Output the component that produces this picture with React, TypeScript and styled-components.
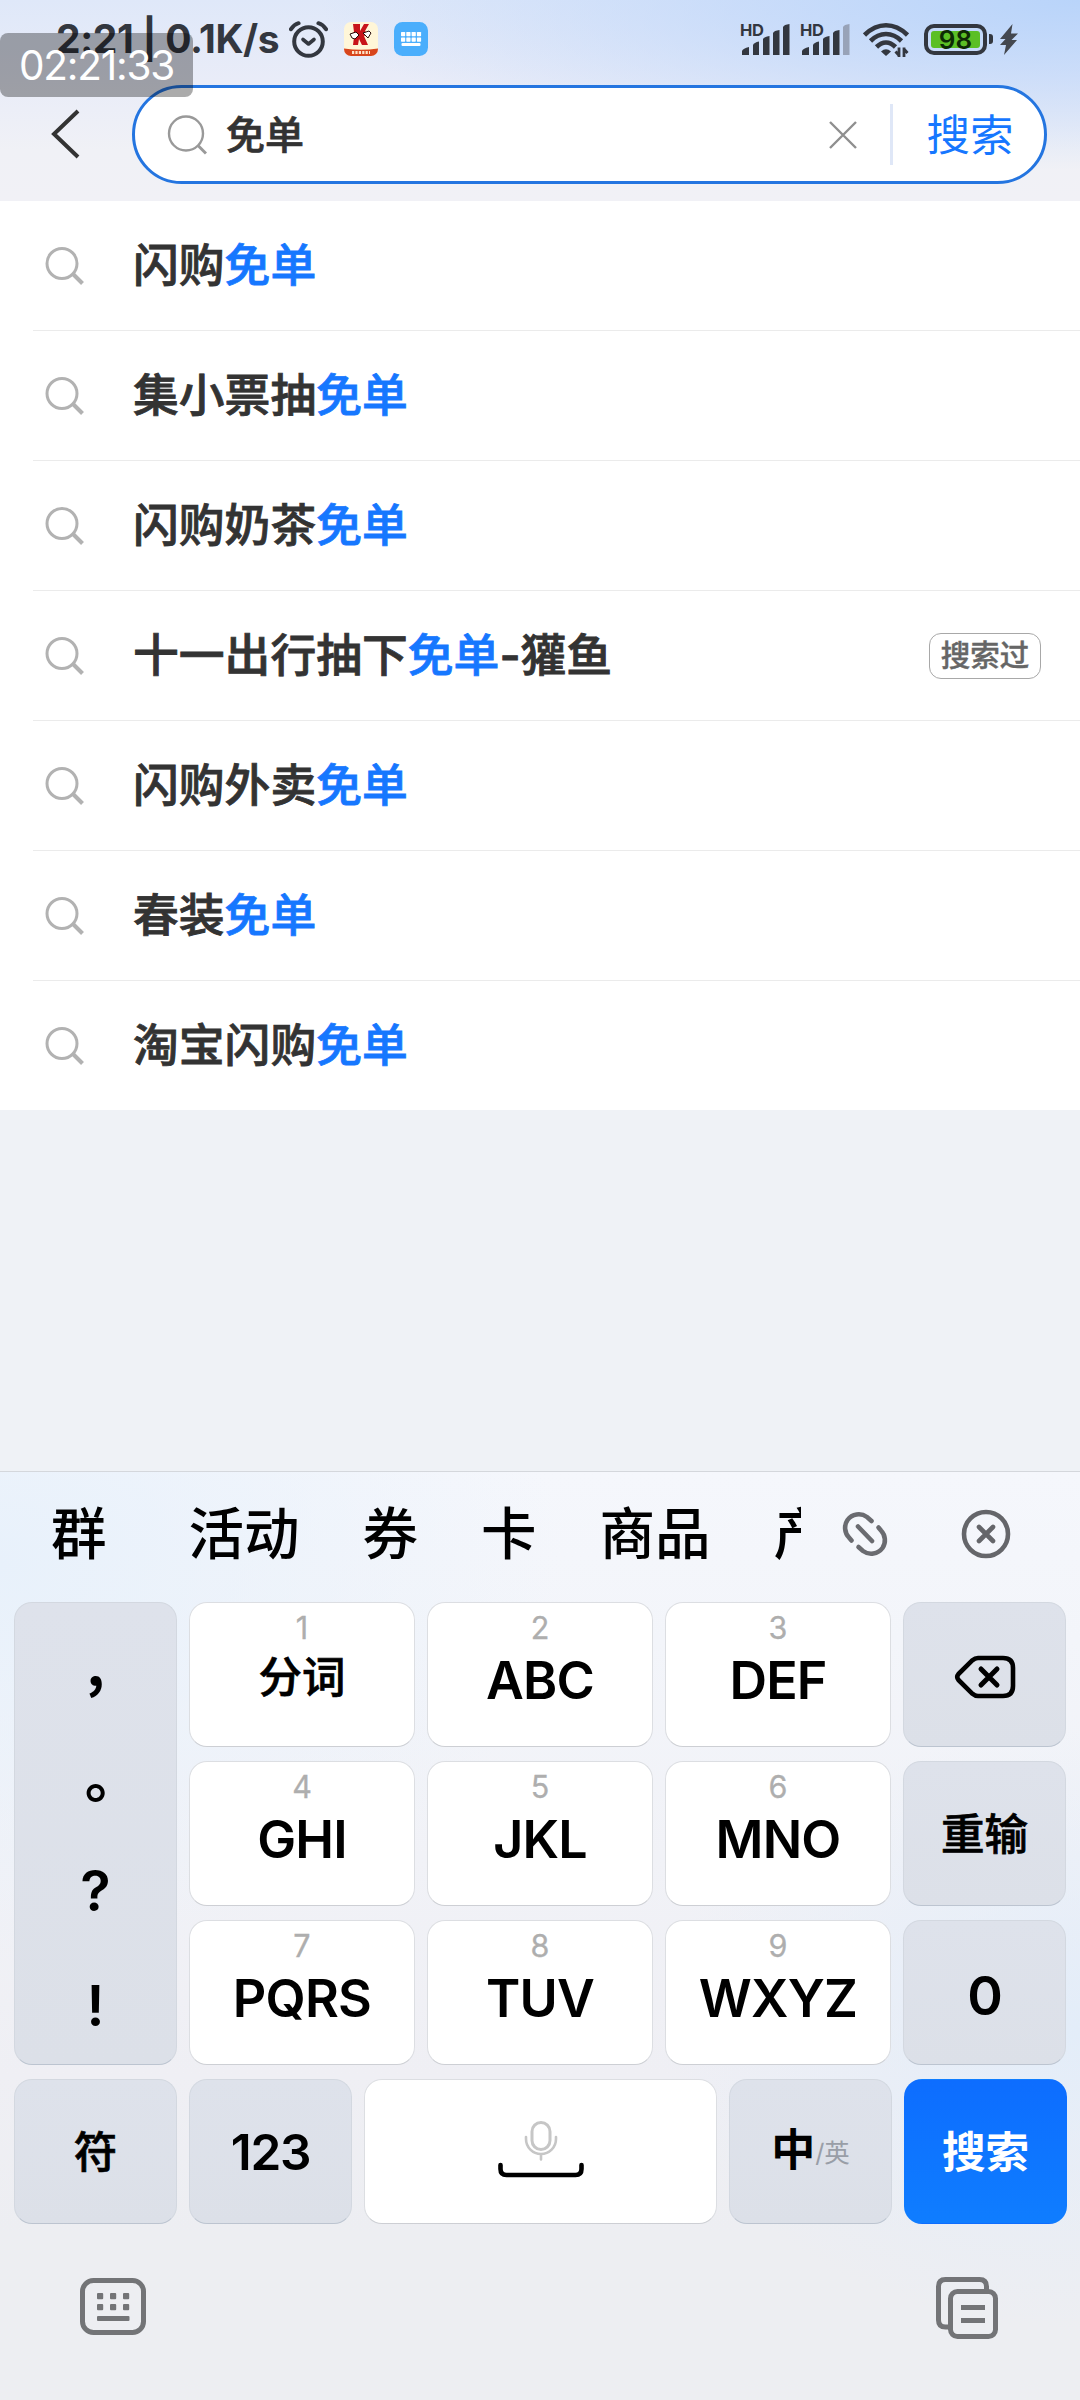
import React from "react";
import styled, { createGlobalStyle, css } from "styled-components";

const GlobalStyle = createGlobalStyle`
  *, *::before, *::after { box-sizing: border-box; }
  html, body { margin: 0; padding: 0; }
  body {
    width: 1080px;
    font-family: Inter, "Noto Sans CJK SC", sans-serif;
    background: #eff2f6;
    -webkit-font-smoothing: antialiased;
  }
  svg { display: block; flex: none; }
`;

const BLUE = "#1677ff";
const INK = "#333333";

const Screen = styled.div`
  position: relative;
  width: 1080px;
  height: 2400px;
  display: flex;
  flex-direction: column;
  overflow: hidden;
  background: #eff2f6;
`;

/* ---------- header ---------- */

const Header = styled.header`
  height: 201px;
  flex: none;
  display: flex;
  flex-direction: column;
  background:
    radial-gradient(ellipse 760px 170px at 100% 0, #b9d4fa 0%, rgba(190, 214, 250, 0.65) 45%, rgba(200, 220, 250, 0) 100%),
    linear-gradient(180deg, #dfe8f9 0%, #e9ecf8 40%, #f0f1f6 75%, #f1f1f6 100%);
`;

const StatusBar = styled.div`
  height: 85px;
  display: flex;
  align-items: flex-start;
  padding: 21px 62px 0 56px;
`;

const Clock = styled.span`
  width: 233px;
  font-size: 39px;
  line-height: 36px;
  font-weight: 700;
  letter-spacing: -0.4px;
  color: #33373f;
  white-space: nowrap;
`;

const StatusLeft = styled.div`
  display: flex;
  flex: 1;
`;

const StatusRight = styled.div`
  display: flex;
`;

const AppBadge = styled.span`
  margin: 1px 0 0 16px;
`;

const SignalBox = styled.span`
  width: 60px;
`;

const WifiBox = styled.span`
  margin-left: 3px;
`;

const Battery = styled.div`
  width: 63px;
  height: 31px;
  margin: 3px 2px 0 15px;
  padding: 3px;
  border: 4px solid #33373f;
  border-radius: 10px;
`;

const BatteryLevel = styled.div`
  height: 100%;
  border-radius: 3px;
  background: #5bbf25;
  color: #0d2a05;
  font-size: 26px;
  font-weight: 600;
  line-height: 18px;
  text-align: center;
`;

const BatteryCap = styled.i`
  width: 4px;
  height: 10px;
  margin: 13px 7px 0 0;
  border-radius: 0 3px 3px 0;
  background: #33373f;
`;

const BoltBox = styled.span`
  margin-top: 3px;
`;

const Timestamp = styled.div`
  position: absolute;
  left: 0;
  top: 33px;
  width: 193px;
  height: 64px;
  border-radius: 8px;
  background: rgba(0, 0, 0, 0.33);
  color: #fff;
  font-size: 40.5px;
  line-height: 66px;
  text-align: center;
  letter-spacing: -1.2px;
`;

const SearchRow = styled.div`
  display: flex;
  align-items: flex-start;
  padding: 0 33px 0 49px;
`;

const BackButton = styled.span`
  width: 83px;
  height: 98px;
  display: flex;
  align-items: center;
`;

const SearchField = styled.div`
  flex: 1;
  height: 99px;
  display: flex;
  align-items: center;
  padding: 0 30.5px 0 32px;
  border: 3px solid #2475e0;
  border-radius: 50px;
  background: #fff;
`;

const Query = styled.span`
  flex: 1;
  padding-left: 19px;
  font-size: 39px;
  line-height: 50px;
  font-weight: 500;
  -webkit-text-stroke: 0.7px ${INK};
  color: ${INK};
`;

const FieldDivider = styled.i`
  width: 3px;
  height: 61px;
  margin: 0 34px 0 33px;
  background: #dfe7f7;
`;

const SearchAction = styled.span`
  font-size: 43.5px;
  line-height: 60px;
  color: ${BLUE};
`;

/* ---------- suggestions ---------- */

const Suggestions = styled.ul`
  margin: 0;
  padding: 0 0 0 33px;
  list-style: none;
  background: #fff;
`;

const SuggestionRow = styled.li`
  height: 130px;
  display: flex;
  align-items: center;
  padding: 0 39px 0 11px;
  &:first-child {
    height: 129px;
  }
  & + & {
    border-top: 1px solid #ebebeb;
  }
`;

const SuggestionText = styled.span`
  flex: 1;
  padding-left: 47px;
  font-size: 45.8px;
  line-height: 60px;
  font-weight: 500;
  -webkit-text-stroke: 0.8px currentColor;
  color: ${INK};
`;

const Match = styled.em`
  font-style: normal;
  color: ${BLUE};
`;

const SearchedTag = styled.span`
  width: 112px;
  height: 46px;
  border: 1px solid #a8a8a8;
  border-radius: 12px;
  font-size: 29.5px;
  line-height: 43px;
  font-weight: 500;
  -webkit-text-stroke: 0.4px currentColor;
  text-align: center;
  white-space: nowrap;
  color: #666;
`;

/* ---------- keyboard ---------- */

const Keyboard = styled.section`
  margin-top: auto;
  height: 929px;
  flex: none;
  border-top: 1px solid #d4d7dc;
  background:
    radial-gradient(ellipse 560px 400px at 0 10%, #e8f1fb 0%, rgba(232, 242, 252, 0) 100%),
    radial-gradient(ellipse 420px 300px at 100% 60%, #e3edf9 0%, rgba(227, 237, 249, 0) 100%),
    linear-gradient(180deg, #f5f7fc 0%, #f3f5fa 18%, #efeff4 65%, #edeef2 82%, #edeef2 100%);
`;

const CandidateBar = styled.div`
  height: 130px;
  display: flex;
  align-items: center;
  padding: 0 68px 6px 51px;
`;

const CandidateList = styled.div`
  width: 750px;
  display: flex;
  gap: 63px;
  overflow: hidden;
  white-space: nowrap;
`;

const Candidate = styled.span<{ $wide?: boolean }>`
  flex: none;
  margin-right: ${(p) => (p.$wide ? 19 : 0)}px;
  font-size: 55.5px;
  line-height: 72px;
  font-weight: 500;
  color: #000;
`;

const BarIcon = styled.span<{ $left: number }>`
  margin-left: ${(p) => p.$left}px;
`;

const KeyGrid = styled.div`
  display: grid;
  grid-template-columns: 163px 1fr 1fr 1fr 163px;
  grid-auto-rows: 145px;
  gap: 14px 12px;
  padding: 0 14px;
`;

const BottomKeys = styled.div`
  display: grid;
  grid-template-columns: 163px 163px 1fr 163px 163px;
  grid-auto-rows: 145px;
  gap: 12px;
  padding: 14px 13px 0 14px;
`;

type Tone = "light" | "dim" | "accent";

const tones = {
  light: css`
    background: #fff;
    border-color: #dcdee2;
    border-bottom-color: #cdcfd4;
    color: #000;
  `,
  dim: css`
    background: linear-gradient(180deg, #dee2eb, #dce0e8);
    border-color: #d3d8e0;
    border-bottom-color: #bcc4d0;
    color: #000;
  `,
  accent: css`
    background: linear-gradient(180deg, #0d6dff, #0f7dff);
    border-color: transparent;
    color: #fff;
  `,
};

const Key = styled.div<{ $tone: Tone; $tall?: boolean }>`
  display: flex;
  flex-direction: column;
  align-items: center;
  justify-content: center;
  border: 1px solid;
  border-radius: 18px;
  background-origin: border-box;
  ${(p) => tones[p.$tone]}
  ${(p) => p.$tall && "grid-row: span 3;"}
`;

const LetterKey = styled(Key)`
  justify-content: flex-start;
  padding-top: 9px;
`;

const KeyHint = styled.span`
  font-size: 30.5px;
  line-height: 32px;
  color: #aeaeae;
  -webkit-text-stroke: 0.3px currentColor;
`;

const KeyLetters = styled.span`
  margin-top: 7px;
  font-size: 52px;
  line-height: 60px;
  font-weight: 600;
  letter-spacing: -0.8px;
`;

const KeyWord = styled.span<{ $bold?: boolean; $top?: number }>`
  margin-top: ${(p) => p.$top ?? 0}px;
  font-size: 43.5px;
  line-height: 60px;
  font-weight: ${(p) => (p.$bold ? 700 : 500)};
  ${(p) => !p.$bold && "-webkit-text-stroke: 0.7px currentColor;"}
`;

const KeyDigits = styled.span<{ $size: number; $top?: number }>`
  margin-top: ${(p) => p.$top ?? 0}px;
  font-size: ${(p) => p.$size}px;
  line-height: 60px;
  font-weight: 600;
  letter-spacing: -1.2px;
`;

const Punctuation = styled.span<{ $drop?: number; $cjk?: boolean }>`
  height: 115px;
  padding-top: ${(p) => p.$drop ?? 0}px;
  font-family: ${(p) => (p.$cjk ? "" : "Inter, ")}"Noto Sans CJK TC", sans-serif;
  font-size: 56px;
  line-height: 115px;
  font-weight: 600;
`;

const LanguageKey = styled.span`
  display: flex;
  align-items: center;
  line-height: 60px;
  padding-bottom: 3px;
`;

const LanguageMain = styled.span`
  font-size: 44px;
  font-weight: 700;
`;

const LanguageAlt = styled.span`
  padding-top: 5px;
  font-size: 25.5px;
  color: #999ea7;
`;

const NavBar = styled.footer`
  display: flex;
  justify-content: space-between;
  padding: 53px 82px 0 80px;
`;

/* ---------- icons ---------- */

const AlarmIcon = () => (
  <svg width="39" height="37" viewBox="0 0 39 37" fill="none" stroke="#33373f" strokeWidth="4" strokeLinecap="round" strokeLinejoin="round">
    <circle cx="19.5" cy="20.5" r="14.3" />
    <path d="M2 8.2Q5 3.5 9.6 2.2M37 8.2Q34 3.5 29.4 2.2" />
    <path d="M14 18.5l5.5 4.5 5.5-4.5" strokeWidth="3.6" />
  </svg>
);

const MascotIcon = () => (
  <svg width="34" height="34" viewBox="0 0 34 34">
    <defs>
      <clipPath id="mascot"><rect width="34" height="34" rx="7" /></clipPath>
    </defs>
    <g clipPath="url(#mascot)">
      <rect width="34" height="34" fill="#fff6d8" />
      <path d="M9 2h7v7l4-7h5l-4 7 3 3-4 2 4 9h-6l-3-6-1 6H9l1-8-3-3 3-2z" fill="#c8141a" />
      <path d="M6 12l6-2 3 3-4 4-3-1zM19 11l6-2 2 2-3 5z" fill="#fff" stroke="#2a0d08" strokeWidth="1" />
      <path d="M0 26.500q17 2.500 34 0V34H0z" fill="#d8451c" />
      <path d="M8 30.500h18" stroke="#ffe3c8" strokeWidth="2.800" strokeDasharray="2.2 1.2" />
    </g>
  </svg>
);

const BlueKeyboardIcon = () => (
  <svg width="34" height="34" viewBox="0 0 34 34" fill="#fff">
    <rect width="34" height="34" rx="8.5" fill="#4aaefc" />
    {[10, 15.5].map((y) => [7, 12.3, 17.6, 22.9].map((x) => <rect key={`${x}-${y}`} x={x} y={y} width="4.200" height="4.200" rx="0.6" />))}
    <rect x="7.500" y="21" width="19" height="3" rx="1" />
  </svg>
);

const SignalIcon = ({ weak = false }: { weak?: boolean }) => (
  <svg width="52" height="36" viewBox="0 0 52 36" fill="#33373f">
    <text x="0" y="14.5" fontSize="16.5" fontWeight="700" fontFamily="Inter, sans-serif" textLength="24">HD</text>
    <path d="M2 34V30Q3 27.500 9 26V34z" />
    <path d="M13 34V24Q14 21.500 19 20.500V34z" />
    <path d="M23 34V18Q24 16 29.500 15V34z" />
    <path d="M33 34V12Q34 9.500 39.500 9V34z" />
    <path d="M43 34V6Q44 3.500 49.500 3V34z" fill={weak ? "#98a3b8" : "#33373f"} />
  </svg>
);

const WifiIcon = () => (
  <svg width="46" height="36" viewBox="0 0 46 36" fill="none" stroke="#33373f" strokeWidth="4.6">
    <path d="M1.500 14Q11.500 4.300 23 4.300T44.500 14" />
    <path d="M7.500 20Q14.500 13 23 13T38.500 20" />
    <path d="M13.500 26Q18 21.500 23 21.500T32.500 26" />
    <path d="M18 30.500Q23 26 28 30.500L23 35z" fill="#33373f" stroke="none" />
    <path d="M36 26.500v9.500M36.500 35l-4-4.500M41 36v-9.500M40.500 27.500l4 4.500" strokeWidth="2.800" />
  </svg>
);

const BoltIcon = () => (
  <svg width="18" height="31" viewBox="0 0 18 31">
    <path d="M12.500 0L0 15h5.500L0 21h6L4 31 17 16h-5.500L18 9.500h-7z" fill="#44484f" />
  </svg>
);

const BackIcon = () => (
  <svg width="32" height="50" viewBox="0 0 32 50" fill="none" stroke="#333" strokeWidth="4">
    <path d="M29 2L5 25l24 23" />
  </svg>
);

const FieldSearchIcon = () => (
  <svg width="40" height="40" viewBox="0 0 40 40" fill="none" stroke="#999" strokeWidth="2.400">
    <circle cx="19" cy="18.500" r="17" />
    <path d="M31 30.500l8 8" strokeWidth="3" />
  </svg>
);

const RowSearchIcon = () => (
  <svg width="42" height="42" viewBox="0 0 42 42" fill="none" stroke="#b2b2b2" strokeWidth="3">
    <circle cx="18" cy="18.500" r="15" />
    <path d="M28.500 28.500l10 10" strokeWidth="4" />
  </svg>
);

const ClearIcon = () => (
  <svg width="28" height="28" viewBox="0 0 28 28" stroke="#8f8f8f" strokeWidth="2.400">
    <path d="M1 1l26 26M27 1L1 27" />
  </svg>
);

const LinkIcon = () => (
  <svg width="46" height="46" viewBox="0 0 46 46" fill="none" stroke="#6a6b70" strokeWidth="4.600" strokeLinecap="round">
    <path d="M9.500 29.500L7 26.500A14 14 0 0 1 5.500 9A14 14 0 0 1 25 6L29.500 10" />
    <path d="M36.500 16.500L39 19.500A14 14 0 0 1 40.500 37A14 14 0 0 1 21 40L16.500 36" />
    <path d="M16 15.500L30 30" />
  </svg>
);

const CloseCircleIcon = () => (
  <svg width="50" height="50" viewBox="0 0 50 50" fill="none" stroke="#65666a" strokeWidth="4.600" strokeLinecap="round">
    <circle cx="25" cy="25" r="22" />
    <path d="M18 18l14 14M32 18L18 32" />
  </svg>
);

const BackspaceIcon = () => (
  <svg width="62" height="48" viewBox="0 -4 62 48" fill="none" stroke="#000" strokeWidth="4.600" strokeLinecap="round" strokeLinejoin="round">
    <path d="M24 3H49Q59 3 59 13V31Q59 41 49 41H24Q21 41 18.500 38.800L4.500 25Q2 22 4.500 19L18.500 5.200Q21 3 24 3z" />
    <path d="M27 14l16 16M43 14L27 30" strokeWidth="5" />
  </svg>
);

const SpaceIcon = () => (
  <svg width="88" height="64" viewBox="0 0 88 64" fill="none" strokeLinecap="round">
    <rect x="35" y="2.500" width="18" height="27" rx="9" stroke="#c6c6c6" strokeWidth="3" />
    <path d="M29 17v2a15 15 0 0 0 30 0v-2M44 34.500v5" stroke="#c6c6c6" strokeWidth="2.600" />
    <path d="M3.500 45v4Q3.500 55 9.500 55H78.500Q84.500 55 84.500 49V45" stroke="#000" strokeWidth="4.600" />
  </svg>
);

const KeyboardIcon = () => (
  <svg width="66" height="60" viewBox="0 -1 66 60" fill="#737477">
    <rect x="2.500" y="2.500" width="61" height="52" rx="11" fill="none" stroke="#737477" strokeWidth="5" />
    {[15, 26].map((y) => [17, 30, 43].map((x) => <rect key={`${x}-${y}`} x={x} y={y} width="6.200" height="6.200" rx="1" />))}
    <rect x="17" y="38" width="32.500" height="5" rx="1" />
  </svg>
);

const ClipboardIcon = () => (
  <svg width="62" height="62" viewBox="0 0 62 62" fill="none" stroke="#737477" strokeWidth="5">
    <path d="M50.500 13V9.500Q50.500 2.500 43.500 2.500H9.500Q2.500 2.500 2.500 9.500V43Q2.500 50 9.500 50H13" />
    <rect x="14.500" y="14.500" width="45" height="45" rx="7" />
    <path d="M25 30.500H49M25 43.500H49" />
  </svg>
);

/* ---------- data ---------- */

interface Suggestion {
  before: string;
  after?: string;
  searched?: boolean;
}

const suggestions: Suggestion[] = [
  { before: "闪购" },
  { before: "集小票抽" },
  { before: "闪购奶茶" },
  { before: "十一出行抽下", after: "-獾鱼", searched: true },
  { before: "闪购外卖" },
  { before: "春装" },
  { before: "淘宝闪购" },
];

const candidates = ["群", "活动", "券", "卡", "商品", "产"];

const letterRows = [
  [["1", "分词"], ["2", "ABC"], ["3", "DEF"]],
  [["4", "GHI"], ["5", "JKL"], ["6", "MNO"]],
  [["7", "PQRS"], ["8", "TUV"], ["9", "WXYZ"]],
];

const sideKeys = [
  <BackspaceIcon key="delete" />,
  <KeyWord key="reset">重输</KeyWord>,
  <KeyDigits key="zero" $size={54} $top={6}>0</KeyDigits>,
];

export default function App() {
  return (
    <>
      <GlobalStyle />
      <Screen>
        <Header>
          <StatusBar>
            <StatusLeft>
              <Clock>2:21 | 0.1K/s</Clock>
              <AlarmIcon />
              <AppBadge><MascotIcon /></AppBadge>
              <AppBadge><BlueKeyboardIcon /></AppBadge>
            </StatusLeft>
            <StatusRight>
              <SignalBox><SignalIcon /></SignalBox>
              <SignalBox><SignalIcon weak /></SignalBox>
              <WifiBox><WifiIcon /></WifiBox>
              <Battery><BatteryLevel>98</BatteryLevel></Battery>
              <BatteryCap />
              <BoltBox><BoltIcon /></BoltBox>
            </StatusRight>
          </StatusBar>
          <SearchRow>
            <BackButton><BackIcon /></BackButton>
            <SearchField>
              <FieldSearchIcon />
              <Query>免单</Query>
              <ClearIcon />
              <FieldDivider />
              <SearchAction>搜索</SearchAction>
            </SearchField>
          </SearchRow>
        </Header>

        <Suggestions>
          {suggestions.map((item) => (
            <SuggestionRow key={item.before}>
              <RowSearchIcon />
              <SuggestionText>
                {item.before}
                <Match>免单</Match>
                {item.after}
              </SuggestionText>
              {item.searched && <SearchedTag>搜索过</SearchedTag>}
            </SuggestionRow>
          ))}
        </Suggestions>

        <Keyboard>
          <CandidateBar>
            <CandidateList>
              {candidates.map((word, i) => (
                <Candidate key={word} $wide={i === 0}>{word}</Candidate>
              ))}
            </CandidateList>
            <BarIcon $left={41}><LinkIcon /></BarIcon>
            <BarIcon $left={73}><CloseCircleIcon /></BarIcon>
          </CandidateBar>
          <KeyGrid>
            <Key $tone="dim" $tall>
              <Punctuation $cjk>,</Punctuation>
              <Punctuation $drop={18}>。</Punctuation>
              <Punctuation>?</Punctuation>
              <Punctuation>!</Punctuation>
            </Key>
            {letterRows.map((row, i) => (
              <React.Fragment key={i}>
                {row.map(([hint, label]) => (
                  <LetterKey key={hint} $tone="light">
                    <KeyHint>{hint}</KeyHint>
                    {hint === "1" ? <KeyWord $top={3}>{label}</KeyWord> : <KeyLetters>{label}</KeyLetters>}
                  </LetterKey>
                ))}
                <Key $tone="dim">{sideKeys[i]}</Key>
              </React.Fragment>
            ))}
          </KeyGrid>
          <BottomKeys>
            <Key $tone="dim"><KeyWord>符</KeyWord></Key>
            <Key $tone="dim"><KeyDigits $size={49.5}>123</KeyDigits></Key>
            <Key $tone="light"><SpaceIcon /></Key>
            <Key $tone="dim">
              <LanguageKey>
                <LanguageMain>中</LanguageMain>
                <LanguageAlt>/英</LanguageAlt>
              </LanguageKey>
            </Key>
            <Key $tone="accent"><KeyWord $bold>搜索</KeyWord></Key>
          </BottomKeys>
          <NavBar>
            <KeyboardIcon />
            <ClipboardIcon />
          </NavBar>
        </Keyboard>
        <Timestamp>02:21:33</Timestamp>
      </Screen>
    </>
  );
}
